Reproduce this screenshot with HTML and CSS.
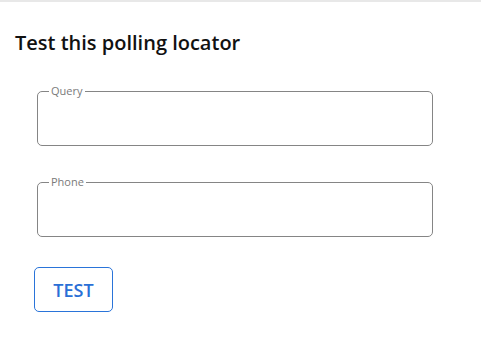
FILE: index.html
```html
<!DOCTYPE html>
<html lang="en">
<head>
    <meta charset="UTF-8">
    <meta name="viewport" content="width=device-width, initial-scale=1.0">
    <title>Test this polling locator</title>
    <link rel="stylesheet" href="styles.css">
</head>
<body>
    <div class="locator-test">
        <h2 class="panel-title">Test this polling locator</h2>

        <form class="test-form">
            <fieldset class="outlined-field">
                <legend>Query</legend>
                <input type="text" id="query">
            </fieldset>
            <fieldset class="outlined-field">
                <legend>Phone</legend>
                <input type="text" id="phone">
            </fieldset>
            <button type="button" class="test-btn">TEST</button>
        </form>
    </div>
</body>
</html>
```

FILE: styles.css
```css
body {
    margin: 0;
    background: #fff;
    font-family: "Open Sans", "Noto Sans", sans-serif;
    color: #111;
}

.locator-test {
    border-top: 2px solid #e8e8e8;
    height: 342px;
}

.panel-title {
    margin: 29px 0 0 15px;
    font-size: 20px;
    font-weight: 600;
    line-height: 24px;
}

.test-form {
    padding: 29px 0 0 37px;
    display: flex;
    flex-direction: column;
    align-items: flex-start;
}

.outlined-field {
    margin: 0 0 29px 0;
    padding: 0 11px;
    width: 396px;
    box-sizing: border-box;
    border: 1px solid #858585;
    border-radius: 5px;
}

.outlined-field legend {
    padding: 0 2px;
    font-size: 11px;
    line-height: 14px;
    color: #7a7a7a;
}

.outlined-field input {
    display: block;
    width: 100%;
    height: 47px;
    border: none;
    outline: none;
    padding: 0;
    font-family: inherit;
    font-size: 14px;
    background: transparent;
}

.test-btn {
    margin: 1px 0 0 -3px;
    width: 79px;
    height: 45px;
    background: #fff;
    border: 1px solid #2a74d9;
    border-radius: 5px;
    color: #2a6fd6;
    font-family: inherit;
    font-size: 18px;
    font-weight: 600;
    cursor: pointer;
}
```
